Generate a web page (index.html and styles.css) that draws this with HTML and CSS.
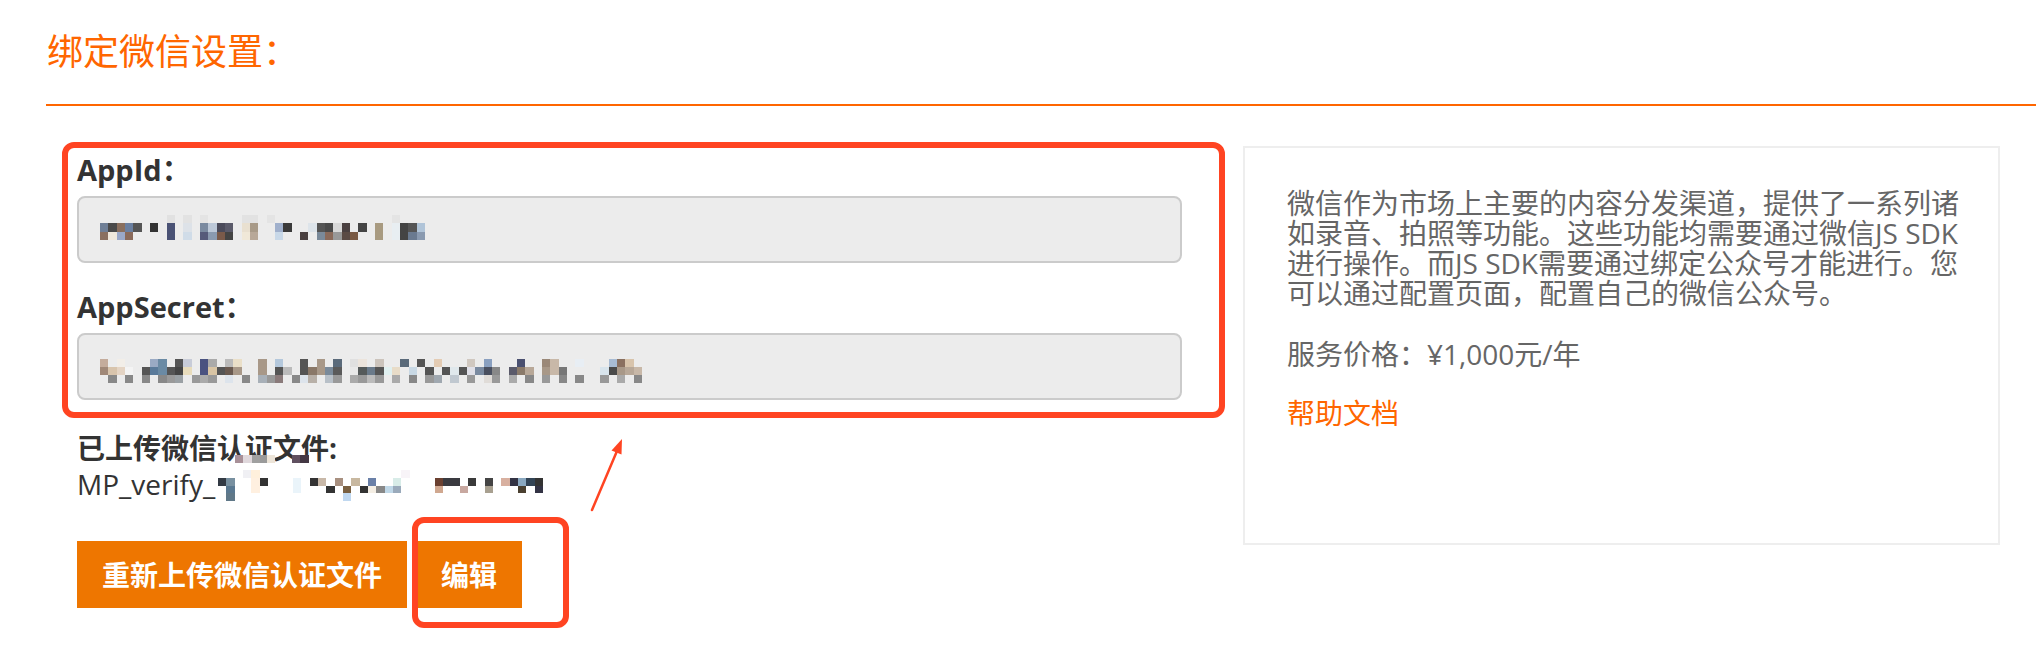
FILE: index.html
```html
<!DOCTYPE html>
<html lang="zh-CN">
<head>
<meta charset="utf-8">
<title>绑定微信设置</title>
<link rel="stylesheet" href="styles.css">
</head>
<body>
<div class="page">
  <h1 class="title">绑定微信设置：</h1>
  <div class="content">
    <div class="form-col">
      <div class="annot-box">
        <label class="field-label">AppId：</label>
        <div class="field-input">
          <svg class="mosaic mosaic-id" width="325" height="25" viewBox="0 0 39 3" preserveAspectRatio="none" shape-rendering="crispEdges">
            <rect x="8" y="0" width="1" height="1" fill="#e1e1e1"/><rect x="10" y="0" width="1" height="1" fill="#e2e2e2"/><rect x="12" y="0" width="1" height="1" fill="#e4e4e4"/><rect x="17" y="0" width="2" height="1" fill="#e2e2e2"/><rect x="20" y="0" width="1" height="1" fill="#e4e4e4"/><rect x="35" y="0" width="1" height="1" fill="#e4e4e4"/>
            <rect x="0" y="1" width="1" height="1" fill="#6f7f96"/><rect x="1" y="1" width="1" height="1" fill="#4a4a4a"/><rect x="2" y="1" width="1" height="1" fill="#8a6f5e"/><rect x="3" y="1" width="1" height="1" fill="#6a7fa0"/><rect x="4" y="1" width="1" height="1" fill="#555"/><rect x="6" y="1" width="1" height="1" fill="#333"/><rect x="8" y="1" width="1" height="1" fill="#4a5275"/><rect x="10" y="1" width="1" height="1" fill="#dde2e8"/><rect x="12" y="1" width="1" height="1" fill="#7a8aa0"/><rect x="13" y="1" width="1" height="1" fill="#bcc8d8"/><rect x="14" y="1" width="1" height="1" fill="#4a4a5a"/><rect x="15" y="1" width="1" height="1" fill="#5a5a6a"/><rect x="17" y="1" width="1" height="1" fill="#e9e0d0"/><rect x="18" y="1" width="1" height="1" fill="#a89a88"/><rect x="21" y="1" width="1" height="1" fill="#a0b0cc"/><rect x="22" y="1" width="1" height="1" fill="#3a3a3a"/><rect x="25" y="1" width="1" height="1" fill="#dde4ea"/><rect x="26" y="1" width="1" height="1" fill="#555"/><rect x="27" y="1" width="1" height="1" fill="#4a4a4a"/><rect x="28" y="1" width="1" height="1" fill="#d8d8d8"/><rect x="29" y="1" width="1" height="1" fill="#4a4040"/><rect x="31" y="1" width="1" height="1" fill="#444"/><rect x="33" y="1" width="1" height="1" fill="#a89a80"/><rect x="35" y="1" width="1" height="1" fill="#e8eef2"/><rect x="36" y="1" width="1" height="1" fill="#444"/><rect x="37" y="1" width="1" height="1" fill="#555"/><rect x="38" y="1" width="1" height="1" fill="#b0c4d8"/>
            <rect x="0" y="2" width="1" height="1" fill="#8a7060"/><rect x="1" y="2" width="1" height="1" fill="#efe8dc"/><rect x="2" y="2" width="1" height="1" fill="#9aa8c8"/><rect x="3" y="2" width="1" height="1" fill="#8a6a5a"/><rect x="8" y="2" width="1" height="1" fill="#4a5275"/><rect x="10" y="2" width="1" height="1" fill="#d0dce8"/><rect x="12" y="2" width="1" height="1" fill="#555a7a"/><rect x="13" y="2" width="1" height="1" fill="#8a9ab0"/><rect x="14" y="2" width="1" height="1" fill="#7a5a4a"/><rect x="15" y="2" width="1" height="1" fill="#444"/><rect x="17" y="2" width="1" height="1" fill="#f0e8d8"/><rect x="18" y="2" width="1" height="1" fill="#b8a898"/><rect x="21" y="2" width="1" height="1" fill="#c8d8e8"/><rect x="24" y="2" width="1" height="1" fill="#4a4040"/><rect x="26" y="2" width="1" height="1" fill="#7a8a9a"/><rect x="27" y="2" width="1" height="1" fill="#8a6a5a"/><rect x="28" y="2" width="1" height="1" fill="#999"/><rect x="29" y="2" width="1" height="1" fill="#5a4a44"/><rect x="30" y="2" width="1" height="1" fill="#7a5a44"/><rect x="33" y="2" width="1" height="1" fill="#a89a80"/><rect x="35" y="2" width="1" height="1" fill="#e8eef2"/><rect x="36" y="2" width="1" height="1" fill="#444"/><rect x="37" y="2" width="1" height="1" fill="#6a7a90"/><rect x="38" y="2" width="1" height="1" fill="#8a9ab0"/>
          </svg>
        </div>
        <label class="field-label field-label-second">AppSecret：</label>
        <div class="field-input">
          <svg class="mosaic mosaic-secret" width="542" height="24" viewBox="0 0 65 3" preserveAspectRatio="none" shape-rendering="crispEdges">
            <rect x="0" y="0" width="1" height="1" fill="#c4ac9c"/><rect x="2" y="0" width="1" height="1" fill="#f2eee8"/><rect x="6" y="0" width="1" height="1" fill="#9aaac4"/><rect x="7" y="0" width="1" height="1" fill="#6a8aa4"/><rect x="9" y="0" width="1" height="1" fill="#555"/><rect x="10" y="0" width="1" height="1" fill="#c8ccd8"/><rect x="12" y="0" width="1" height="1" fill="#4a5280"/><rect x="13" y="0" width="1" height="1" fill="#aaa"/><rect x="15" y="0" width="1" height="1" fill="#bbb"/><rect x="16" y="0" width="1" height="1" fill="#eadfc8"/><rect x="19" y="0" width="1" height="1" fill="#a89888"/><rect x="21" y="0" width="1" height="1" fill="#b4c8dc"/><rect x="24" y="0" width="1" height="1" fill="#555"/><rect x="26" y="0" width="1" height="1" fill="#a89888"/><rect x="28" y="0" width="1" height="1" fill="#5a6a7a"/><rect x="30" y="0" width="1" height="1" fill="#e0e0e0"/><rect x="31" y="0" width="1" height="1" fill="#ece4dc"/><rect x="33" y="0" width="1" height="1" fill="#ccc4bc"/><rect x="36" y="0" width="1" height="1" fill="#5a6a7a"/><rect x="38" y="0" width="1" height="1" fill="#555"/><rect x="40" y="0" width="1" height="1" fill="#e4ccb4"/><rect x="44" y="0" width="1" height="1" fill="#d0c8c0"/><rect x="46" y="0" width="1" height="1" fill="#8aa0c0"/><rect x="50" y="0" width="1" height="1" fill="#4a5070"/><rect x="53" y="0" width="1" height="1" fill="#9a8878"/><rect x="54" y="0" width="1" height="1" fill="#c8b8a8"/><rect x="57" y="0" width="1" height="1" fill="#e8eef4"/><rect x="61" y="0" width="1" height="1" fill="#a8bcd4"/><rect x="62" y="0" width="1" height="1" fill="#8a7060"/><rect x="63" y="0" width="1" height="1" fill="#d8c4ac"/>
            <rect x="0" y="1" width="1" height="1" fill="#a08878"/><rect x="1" y="1" width="1" height="1" fill="#d8c4ac"/><rect x="2" y="1" width="1" height="1" fill="#e4d4c4"/><rect x="3" y="1" width="1" height="1" fill="#f4f4f4"/><rect x="5" y="1" width="1" height="1" fill="#555"/><rect x="6" y="1" width="1" height="1" fill="#5a7a9a"/><rect x="7" y="1" width="1" height="1" fill="#6a8aa4"/><rect x="8" y="1" width="1" height="1" fill="#555"/><rect x="9" y="1" width="1" height="1" fill="#444"/><rect x="10" y="1" width="1" height="1" fill="#e8dcbc"/><rect x="12" y="1" width="1" height="1" fill="#4a5280"/><rect x="13" y="1" width="1" height="1" fill="#d8c4a4"/><rect x="14" y="1" width="1" height="1" fill="#555"/><rect x="15" y="1" width="1" height="1" fill="#6a5a50"/><rect x="16" y="1" width="1" height="1" fill="#a89888"/><rect x="19" y="1" width="1" height="1" fill="#a89888"/><rect x="21" y="1" width="1" height="1" fill="#555"/><rect x="22" y="1" width="1" height="1" fill="#bbb"/><rect x="24" y="1" width="1" height="1" fill="#555"/><rect x="25" y="1" width="1" height="1" fill="#8a7868"/><rect x="26" y="1" width="1" height="1" fill="#a89888"/><rect x="27" y="1" width="1" height="1" fill="#7a8a9a"/><rect x="28" y="1" width="1" height="1" fill="#5a5a5a"/><rect x="30" y="1" width="1" height="1" fill="#e8e8e8"/><rect x="31" y="1" width="1" height="1" fill="#555a5a"/><rect x="32" y="1" width="1" height="1" fill="#6a7a8a"/><rect x="33" y="1" width="1" height="1" fill="#555"/><rect x="34" y="1" width="1" height="1" fill="#e0f0f0"/><rect x="35" y="1" width="1" height="1" fill="#e8dcc8"/><rect x="37" y="1" width="1" height="1" fill="#c8d8e4"/><rect x="39" y="1" width="1" height="1" fill="#555"/><rect x="41" y="1" width="1" height="1" fill="#555"/><rect x="42" y="1" width="1" height="1" fill="#e0e8ec"/><rect x="43" y="1" width="1" height="1" fill="#555"/><rect x="44" y="1" width="1" height="1" fill="#e0e0e8"/><rect x="45" y="1" width="1" height="1" fill="#7a8aa0"/><rect x="46" y="1" width="1" height="1" fill="#4a5060"/><rect x="47" y="1" width="1" height="1" fill="#888"/><rect x="49" y="1" width="1" height="1" fill="#5a5a6a"/><rect x="50" y="1" width="1" height="1" fill="#8a7a6a"/><rect x="51" y="1" width="1" height="1" fill="#b8a898"/><rect x="53" y="1" width="1" height="1" fill="#a89888"/><rect x="54" y="1" width="1" height="1" fill="#c8b8a8"/><rect x="55" y="1" width="1" height="1" fill="#777"/><rect x="60" y="1" width="1" height="1" fill="#d8e4ec"/><rect x="61" y="1" width="1" height="1" fill="#4a4a4a"/><rect x="62" y="1" width="1" height="1" fill="#a89888"/><rect x="63" y="1" width="1" height="1" fill="#b8a898"/><rect x="64" y="1" width="1" height="1" fill="#c8b8a8"/>
            <rect x="1" y="2" width="1" height="1" fill="#888"/><rect x="3" y="2" width="1" height="1" fill="#888"/><rect x="5" y="2" width="1" height="1" fill="#888"/><rect x="7" y="2" width="1" height="1" fill="#888"/><rect x="8" y="2" width="1" height="1" fill="#999"/><rect x="9" y="2" width="1" height="1" fill="#9aa0a4"/><rect x="11" y="2" width="1" height="1" fill="#999"/><rect x="12" y="2" width="1" height="1" fill="#aaa"/><rect x="13" y="2" width="1" height="1" fill="#999"/><rect x="15" y="2" width="1" height="1" fill="#dde4ec"/><rect x="17" y="2" width="1" height="1" fill="#888"/><rect x="19" y="2" width="1" height="1" fill="#a8b0b8"/><rect x="20" y="2" width="1" height="1" fill="#999"/><rect x="21" y="2" width="1" height="1" fill="#8a7a7a"/><rect x="23" y="2" width="1" height="1" fill="#888"/><rect x="24" y="2" width="1" height="1" fill="#dde4ec"/><rect x="25" y="2" width="1" height="1" fill="#b8b0a8"/><rect x="27" y="2" width="1" height="1" fill="#b8c0c8"/><rect x="28" y="2" width="1" height="1" fill="#999"/><rect x="30" y="2" width="1" height="1" fill="#aaa"/><rect x="31" y="2" width="1" height="1" fill="#999"/><rect x="32" y="2" width="1" height="1" fill="#bbb"/><rect x="33" y="2" width="1" height="1" fill="#999"/><rect x="35" y="2" width="1" height="1" fill="#aaa"/><rect x="37" y="2" width="1" height="1" fill="#888"/><rect x="39" y="2" width="1" height="1" fill="#999"/><rect x="40" y="2" width="1" height="1" fill="#a0a8b0"/><rect x="42" y="2" width="1" height="1" fill="#c0c8d0"/><rect x="44" y="2" width="1" height="1" fill="#999"/><rect x="46" y="2" width="1" height="1" fill="#e0dcd8"/><rect x="47" y="2" width="1" height="1" fill="#999"/><rect x="49" y="2" width="1" height="1" fill="#aaa"/><rect x="51" y="2" width="1" height="1" fill="#888"/><rect x="53" y="2" width="1" height="1" fill="#999"/><rect x="55" y="2" width="1" height="1" fill="#888"/><rect x="57" y="2" width="1" height="1" fill="#888"/><rect x="60" y="2" width="1" height="1" fill="#999"/><rect x="62" y="2" width="1" height="1" fill="#aaa"/><rect x="64" y="2" width="1" height="1" fill="#888"/>
          </svg>
        </div>
      </div>

      <div class="file-label">已上传微信认证文件:<svg class="file-label-mosaic" width="74" height="8" viewBox="0 0 74 8" shape-rendering="crispEdges"><rect x="0" y="0" width="8" height="8" fill="#a89098"/><rect x="8" y="0" width="9" height="8" fill="#e0d8dc"/><rect x="17" y="0" width="8" height="8" fill="#a0a0a0"/><rect x="25" y="0" width="7" height="8" fill="#9a9a9a"/><rect x="32" y="0" width="8" height="8" fill="#ece4d8"/><rect x="57" y="0" width="8" height="8" fill="#605060"/><rect x="65" y="0" width="9" height="8" fill="#443844"/></svg></div>
      <div class="file-name">MP_verify_<svg class="mosaic mosaic-file" width="325" height="31" viewBox="0 0 39 4" preserveAspectRatio="none" shape-rendering="crispEdges">
          <rect x="3" y="0" width="1" height="1" fill="#f0f0f4"/><rect x="4" y="0" width="1" height="1" fill="#fff0dc"/><rect x="22" y="0" width="1" height="1" fill="#f8f4f8"/>
          <rect x="0" y="1" width="1" height="1" fill="#333a44"/><rect x="1" y="1" width="1" height="1" fill="#7890a0"/><rect x="4" y="1" width="1" height="1" fill="#fff0e0"/><rect x="5" y="1" width="1" height="1" fill="#333"/><rect x="9" y="1" width="1" height="1" fill="#eaf4fa"/><rect x="11" y="1" width="1" height="1" fill="#333"/><rect x="12" y="1" width="1" height="1" fill="#c8b8a8"/><rect x="14" y="1" width="1" height="1" fill="#a89080"/><rect x="16" y="1" width="1" height="1" fill="#c8b8a0"/><rect x="18" y="1" width="1" height="1" fill="#6a80a8"/><rect x="21" y="1" width="1" height="1" fill="#d8ece8"/><rect x="26" y="1" width="1" height="1" fill="#6a4030"/><rect x="27" y="1" width="2" height="1" fill="#3a3a40"/><rect x="30" y="1" width="1" height="1" fill="#3a3a3a"/><rect x="32" y="1" width="1" height="1" fill="#444"/><rect x="34" y="1" width="1" height="1" fill="#d8b0a0"/><rect x="35" y="1" width="1" height="1" fill="#333344"/><rect x="36" y="1" width="1" height="1" fill="#8aa8c0"/><rect x="37" y="1" width="1" height="1" fill="#334455"/><rect x="38" y="1" width="1" height="1" fill="#333"/>
          <rect x="1" y="2" width="1" height="1" fill="#5a7890"/><rect x="4" y="2" width="1" height="1" fill="#fff0e0"/><rect x="9" y="2" width="1" height="1" fill="#eaf4fa"/><rect x="13" y="2" width="1" height="1" fill="#333"/><rect x="15" y="2" width="1" height="1" fill="#7a6040"/><rect x="17" y="2" width="1" height="1" fill="#333"/><rect x="18" y="2" width="1" height="1" fill="#f4eee4"/><rect x="19" y="2" width="1" height="1" fill="#888"/><rect x="20" y="2" width="1" height="1" fill="#c0d8e8"/><rect x="21" y="2" width="1" height="1" fill="#9aaabb"/><rect x="26" y="2" width="1" height="1" fill="#d0a890"/><rect x="29" y="2" width="1" height="1" fill="#c8a8a0"/><rect x="32" y="2" width="1" height="1" fill="#a8a090"/><rect x="36" y="2" width="1" height="1" fill="#4a4030"/><rect x="38" y="2" width="1" height="1" fill="#333344"/>
          <rect x="1" y="3" width="1" height="1" fill="#607888"/><rect x="15" y="3" width="1" height="1" fill="#c0d8f0"/>
        </svg></div>

      <div class="actions">
        <button class="btn">重新上传微信认证文件</button>
        <button class="btn">编辑</button>
      </div>

      <div class="annot-edit"></div>
      <svg class="annot-arrow" width="42" height="82" viewBox="0 0 42 82">
        <line x1="5" y1="76" x2="30" y2="17" stroke="#ff4422" stroke-width="2.5" stroke-linecap="round"/>
        <polygon points="35,5 34.5,20.5 24.5,16.5" fill="#ff4422"/>
      </svg>
    </div>

    <div class="info-panel">
      <p class="info-text">微信作为市场上主要的内容分发渠道，提供了一系列诸<br>如录音、拍照等功能。这些功能均需要通过微信JS SDK<br>进行操作。而JS SDK需要通过绑定公众号才能进行。您<br>可以通过配置页面，配置自己的微信公众号。</p>
      <p class="info-price">服务价格：¥1,000元/年</p>
      <a class="info-link" href="#">帮助文档</a>
    </div>
  </div>
</div>
</body>
</html>
```

FILE: styles.css
```css
html, body {
  margin: 0;
  padding: 0;
  background: #ffffff;
}

body {
  font-family: "Open Sans", "Noto Sans CJK SC", sans-serif;
  color: #333333;
}

.page {
  padding: 0 0 60px 46px;
}

.title {
  margin: 0;
  padding: 23px 0 29px 1px;
  font-size: 36px;
  font-weight: normal;
  line-height: 52px;
  color: #ff6600;
  font-family: "Noto Sans CJK SC", sans-serif;
  border-bottom: 2px solid #ff6600;
}

.content {
  display: flex;
  align-items: flex-start;
  margin-top: 36px;
}

.form-col {
  position: relative;
  flex: none;
  width: 1105px;
  min-height: 490px;
  margin-left: 31px;
}

.annot-box {
  border: 6px solid #ff4422;
  border-radius: 12px;
  margin: 0 -43px 0 -15px;
  padding: 4px 37px 12px 9px;
}

.field-label {
  display: block;
  height: 38px;
  font-size: 29px;
  font-weight: bold;
  line-height: 36px;
  color: #333333;
}

.field-label-second {
  margin-top: 26px;
}

.field-input {
  box-sizing: border-box;
  height: 67px;
  margin-top: 6px;
  padding-left: 21px;
  border: 2px solid #cbcbcb;
  border-radius: 8px;
  background: #ececec;
  display: flex;
  align-items: flex-start;
}

.mosaic {
  display: block;
}

.mosaic-id {
  margin-top: 17px;
}

.mosaic-secret {
  margin-top: 24px;
}

.file-label {
  position: relative;
  margin-top: 12px;
  font-size: 28px;
  font-weight: bold;
  line-height: 36px;
  color: #333333;
}

.file-label-mosaic {
  position: absolute;
  left: 158px;
  top: 25px;
}

.file-name {
  font-size: 28px;
  line-height: 36px;
  color: #333333;
  white-space: nowrap;
}

.mosaic-file {
  display: inline-block;
  vertical-align: top;
  margin-top: 4px;
  margin-left: 3px;
}

.actions {
  display: flex;
  gap: 9px;
  margin-top: 39px;
}

.btn {
  height: 67px;
  padding: 0 25px;
  border: 0;
  border-radius: 0;
  background: #ee7600;
  color: #ffffff;
  font-family: "Noto Sans CJK SC", sans-serif;
  font-size: 28px;
  font-weight: bold;
  line-height: 67px;
  cursor: pointer;
}

.annot-edit {
  position: absolute;
  left: 335px;
  top: 375px;
  width: 157px;
  height: 111px;
  box-sizing: border-box;
  border: 6px solid #ff4422;
  border-radius: 12px;
  z-index: 2;
}

.annot-arrow {
  position: absolute;
  left: 510px;
  top: 292px;
  z-index: 2;
}

.info-panel {
  box-sizing: border-box;
  flex: none;
  width: 757px;
  height: 399px;
  margin-top: 4px;
  margin-left: 61px;
  padding: 40px 20px 0 42px;
  border: 2px solid #eeeeee;
  color: #666666;
  font-size: 28px;
  line-height: 30px;
}

.info-text {
  margin: 0;
  white-space: nowrap;
}

.info-price {
  margin: 31px 0 0;
}

.info-link {
  display: block;
  margin-top: 29px;
  color: #ff6600;
  text-decoration: none;
}
```
